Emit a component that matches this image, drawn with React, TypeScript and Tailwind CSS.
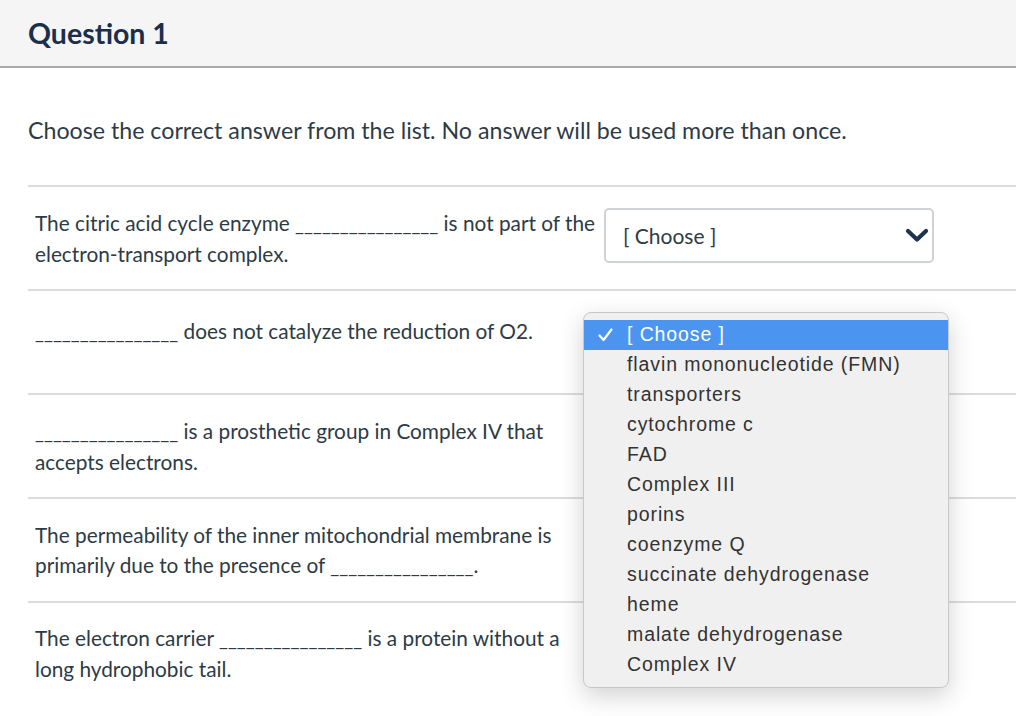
import React from "react";

const Blank = () => <span className="text-[19.5px]">________________</span>;

const options = [
  "[ Choose ]",
  "flavin mononucleotide (FMN)",
  "transporters",
  "cytochrome c",
  "FAD",
  "Complex III",
  "porins",
  "coenzyme Q",
  "succinate dehydrogenase",
  "heme",
  "malate dehydrogenase",
  "Complex IV",
];

const Chevron = () => (
  <svg width="24" height="15" viewBox="0 0 24 15" fill="none">
    <path d="M3 3 L12 11.5 L21 3" stroke="#1f3350" strokeWidth="4.2" strokeLinecap="round" strokeLinejoin="round" />
  </svg>
);

const SelectBox = () => (
  <div className="ml-[5px] flex h-[55px] w-[330px] shrink-0 items-center justify-between rounded-[5px] border-2 border-[#cfd3d6] bg-white pl-[17px] pr-[3px]">
    <span className="text-[21px] text-[#2d3b45]">[ Choose ]</span>
    <Chevron />
  </div>
);

type RowProps = {
  children: React.ReactNode;
  select?: boolean;
  pad?: string;
};

const Row = ({ children, select, pad = "pt-[21px]" }: RowProps) => (
  <div className={`flex h-[104px] border-t-2 border-[#dcdcdc] pl-[7px] ${pad}`}>
    <div className="w-[564px] shrink-0 text-[20.8px] leading-[30px] text-[#2d3b45]">{children}</div>
    {select && <SelectBox />}
  </div>
);

const Popup = () => (
  <div className="absolute left-[583px] top-[312px] w-[366px] rounded-[8px] border border-[#c9c9c9] bg-[#f0f0f0] py-[7px] shadow-[0_8px_24px_rgba(0,0,0,0.18)]">
    {options.map((o, i) => (
      <div
        key={o}
        className={`flex h-[30px] items-center text-[19.5px] tracking-[0.9px] ${
          i === 0 ? "bg-[#4b95f0] text-white" : "text-[#333333]"
        }`}
        style={{ fontFamily: '"Liberation Sans", Arial, sans-serif' }}
      >
        <span className="flex w-[43px] justify-end pr-[14px]">
          {i === 0 && (
            <svg width="15" height="14" viewBox="0 0 15 14" fill="none">
              <path d="M1.5 7.5 L5.5 12 L13.5 1.5" stroke="white" strokeWidth="2.2" strokeLinecap="round" strokeLinejoin="round" />
            </svg>
          )}
        </span>
        <span>{o}</span>
      </div>
    ))}
  </div>
);

export default function App() {
  return (
    <div
      className="relative h-[716px] w-[1016px] overflow-hidden bg-white"
      style={{ fontFamily: 'Lato, "Open Sans", sans-serif' }}
    >
      <div className="flex h-[68px] items-center border-b-2 border-[#a9a9a9] bg-[#f5f5f5] px-[28px]">
        <h1 className="text-[28.5px] font-bold text-[#1b2e4b]">Question 1</h1>
      </div>
      <p className="pl-[28px] pt-[47px] text-[23.2px] leading-[30px] text-[#2d3b45]">
        Choose the correct answer from the list. No answer will be used more than once.
      </p>
      <div className="ml-[28px] mt-[40px]">
        <Row select>
          The citric acid cycle enzyme <Blank /> is not part of the electron-transport complex.
        </Row>
        <Row pad="pt-[25px]">
          <Blank /> does not catalyze the reduction of O2.
        </Row>
        <Row>
          <Blank /> is a prosthetic group in Complex IV that accepts electrons.
        </Row>
        <Row>
          The permeability of the inner mitochondrial membrane is primarily due to the presence of <Blank />.
        </Row>
        <Row pad="pt-[20px]">
          The electron carrier <Blank /> is a protein without a long hydrophobic tail.
        </Row>
      </div>
      <Popup />
    </div>
  );
}
